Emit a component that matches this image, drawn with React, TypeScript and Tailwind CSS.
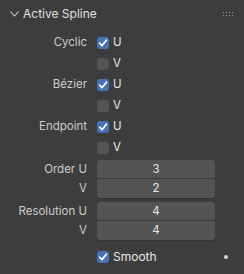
import React from "react";

const font = { fontFamily: "Inter, 'Noto Sans', sans-serif" };

function Check({ on }: { on: boolean }) {
  return (
    <div
      className={`w-[12px] h-[12px] rounded-[3px] flex items-center justify-center ${
        on ? "bg-[#4772b3]" : "bg-[#545454]"
      }`}
    >
      {on && (
        <svg width="10" height="10" viewBox="0 0 10 10">
          <path d="M1.8 5.2 L4 7.6 L8.4 2.2" fill="none" stroke="#ffffff" strokeWidth="1.7" strokeLinecap="round" strokeLinejoin="round" />
        </svg>
      )}
    </div>
  );
}

function CheckRow({ label, sub, on }: { label?: string; sub: string; on: boolean }) {
  return (
    <div className="flex items-center h-[21px]">
      <div className="w-[87px] text-right text-[#cccccc]">{label}</div>
      <div className="ml-[10px]">
        <Check on={on} />
      </div>
      <div className="ml-[4px] text-[#e6e6e6]">{sub}</div>
    </div>
  );
}

function NumPair({ top, bottom }: { top: [string, string]; bottom: [string, string] }) {
  return (
    <div className="flex">
      <div className="w-[87px] flex flex-col text-[#cccccc] text-right">
        <div className="h-[19px] leading-[19px]">{top[0]}</div>
        <div className="h-[19px] leading-[19px]">{bottom[0]}</div>
      </div>
      <div className="ml-[10px] w-[118px] flex flex-col rounded-[4px] overflow-hidden text-[#e6e6e6] shadow-[0_1px_0_#333333]">
        <div className="h-[19px] leading-[19px] bg-[#545454] text-center border-b border-[#3d3d3d]">{top[1]}</div>
        <div className="h-[19px] leading-[19px] bg-[#545454] text-center">{bottom[1]}</div>
      </div>
    </div>
  );
}

export default function App() {
  return (
    <div className="w-[244px] h-[274px] bg-[#3d3d3d] text-[11.5px] overflow-hidden" style={font}>
      <div className="h-[27px] flex items-center pl-[10px] pr-[10px]">
        <svg width="9" height="6" viewBox="0 0 9 6" className="mt-[1px]">
          <path d="M0.5 0.5 L4.5 5 L8.5 0.5" fill="none" stroke="#cfcfcf" strokeWidth="1.1" />
        </svg>
        <div className="ml-[4px] text-[#e0e0e0] text-[12px]">Active Spline</div>
        <div className="ml-auto grid grid-cols-4 gap-x-[2px] gap-y-[2px] mr-[1px]">
          {Array.from({ length: 8 }).map((_, i) => (
            <div key={i} className="w-[1px] h-[1px] bg-[#9a9a9a]" />
          ))}
        </div>
      </div>
      <div className="pt-[5px]">
        <CheckRow label="Cyclic" sub="U" on />
        <CheckRow sub="V" on={false} />
        <CheckRow label="Bézier" sub="U" on />
        <CheckRow sub="V" on={false} />
        <CheckRow label="Endpoint" sub="U" on />
        <CheckRow sub="V" on={false} />
      </div>
      <div className="mt-[2px] flex flex-col gap-[4px]">
        <NumPair top={["Order U", "3"]} bottom={["V", "2"]} />
        <NumPair top={["Resolution U", "4"]} bottom={["V", "4"]} />
      </div>
      <div className="mt-[6px] flex items-center h-[21px]">
        <div className="ml-[97px]">
          <Check on />
        </div>
        <div className="ml-[4px] text-[#e6e6e6] text-[12px]">Smooth</div>
        <div className="ml-auto mr-[16px] w-[4px] h-[4px] rounded-full bg-[#d8d8d8]" />
      </div>
    </div>
  );
}
